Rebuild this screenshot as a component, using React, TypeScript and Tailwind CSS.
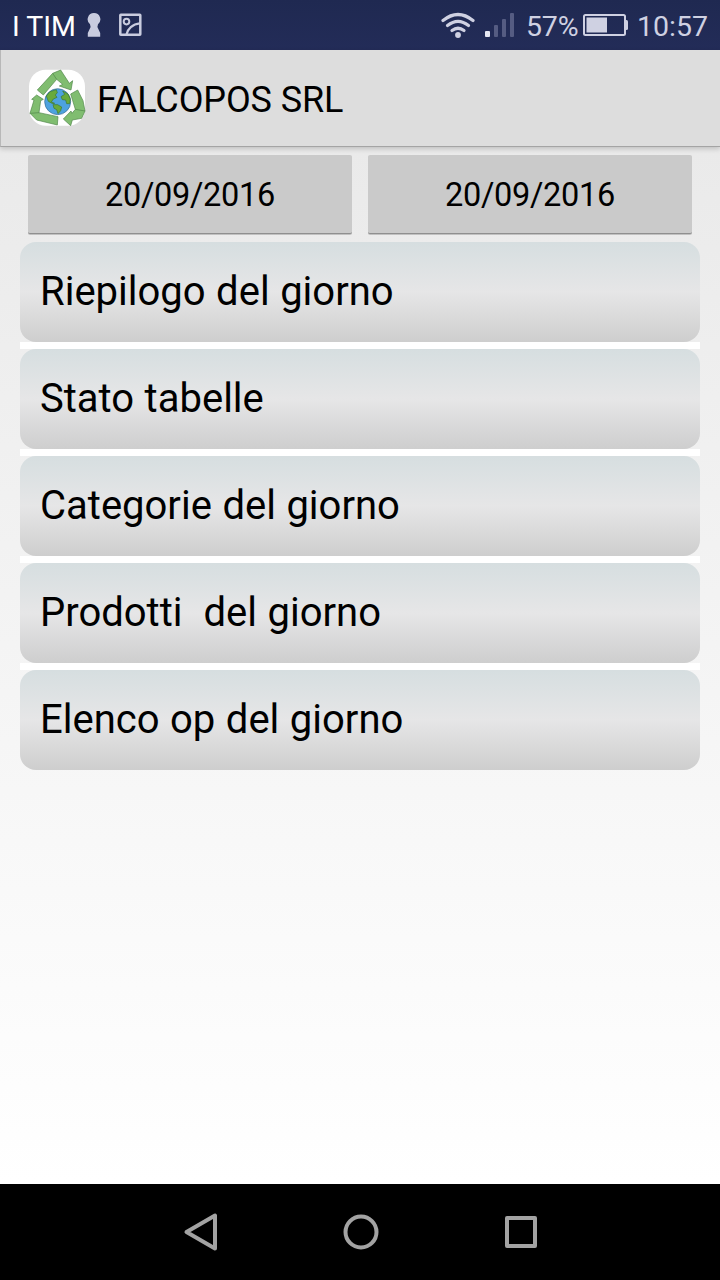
const ENTRIES = [
  'Riepilogo del giorno',
  'Stato tabelle',
  'Categorie del giorno',
  'Prodotti  del giorno',
  'Elenco op del giorno',
];

const DATES = ['20/09/2016', '20/09/2016'];

function StatusBar() {
  return (
    <div className="flex h-[50px] shrink-0 items-center bg-linear-to-b from-[#1f2951] to-[#232c58] px-3 text-[28.5px] leading-[50px] text-[#cfd1e2]">
      <span className="w-[75px] whitespace-nowrap pt-[3px] text-white">I TIM</span>
      <svg className="h-[50px] w-[14px]" viewBox="0 0 14 50" fill="#c9ccdf">
        <path d="M7 13a6.3 6.3 0 0 1 4 11.2 L10.4 27 L13.2 33 V36.8 H0.8 V33 L3.6 27 L3 24.2 A6.3 6.3 0 0 1 7 13z" />
      </svg>
      <svg className="ml-[17px] h-[50px] w-6" viewBox="118 0 24 50" fill="none" stroke="#c9ccdf" strokeWidth="2.5">
        <rect x="120.3" y="14.8" width="20" height="20" rx="0.5" />
        <circle cx="126.5" cy="21.6" r="2.8" strokeWidth="2" />
        <path d="M126.5 34.500C127.500 29 132.500 24 140 23.300" strokeWidth="2.2" />
      </svg>

      <svg className="ml-auto h-[50px] w-[74px]" viewBox="441 0 74 50">
        <g fill="none" stroke="#cfd1e2" strokeWidth="3.2" strokeLinecap="round">
          <path d="M443 20.500Q458 8.500 473 20.500" />
          <path d="M447.500 25.600Q458 17.200 468.500 25.600" />
          <path d="M452 30.500Q458 26 464 30.500" />
        </g>
        <circle cx="458" cy="35" r="2.9" fill="#cfd1e2" />
        <rect x="485" y="31" width="5" height="6" rx="1" fill="#e6e7f2" />
        <g fill="#555c82">
          <rect x="494" y="25" width="4" height="12" rx="1" />
          <rect x="502" y="19" width="4" height="18" rx="1" />
          <rect x="510" y="13" width="4" height="24" rx="1" />
        </g>
      </svg>
      <span className="ml-[11px] w-[57px] whitespace-nowrap pt-[3px] tracking-[-0.2px]">57%</span>
      <svg className="h-[50px] w-[46px]" viewBox="583 0 46 50">
        <rect x="584" y="15" width="41" height="20" rx="1.5" fill="none" stroke="#cfd1e2" strokeWidth="2" />
        <rect x="586.5" y="17.5" width="20.5" height="15" fill="#cfd1e2" />
        <path d="M625 20h1.500q1.500 0 1.500 1.500v7q0 1.500-1.500 1.500H625z" fill="#cfd1e2" />
      </svg>
      <span className="ml-[8px] w-[71px] whitespace-nowrap pt-[3px]">10:57</span>
    </div>
  );
}

function Logo() {
  return (
    <svg className="mb-[2px] size-[58px]" viewBox="24 24 174 174">
      <rect x="27" y="29" width="168" height="168" rx="50" fill="#fff" />
      <g fill="#80bd70" stroke="#4f8549" strokeWidth="2" strokeLinejoin="round">
        {/* top arrow */}
        <path d="M52 90 L98 40 L122 30 L148 70 L158 62 L153 90 L118 78 L128 73 L110 58 L70 105z" />
        <path d="M98 40 L110 58" />
        {/* right arrow */}
        <path d="M152 102 L173 90 L189 122 L195 153 L185 175 L157 180 L152 197 L130 177 L153 153 L156 160 L166 148z" />
        <path d="M166 148 L195 153" />
        {/* left arrow */}
        <path d="M35 118 L50 105 L70 118 L62 122 L57 158 L114 170 L112 195 L50 180 L30 160 L42 120z" />
        <path d="M57 158 L30 160" />
      </g>
      <circle cx="113" cy="125" r="39" fill="#4da2df" stroke="#37688f" strokeWidth="2" />
      <g fill="#68aa3c" stroke="#3d762d" strokeWidth="2" strokeLinejoin="round">
        <path d="M79 108 L90 95 L109 89 L112 98 L106 105 L111 112 L100 117 L94 126 L104 130 L98 131 L85 124z" />
        <path d="M99 134 L113 134 L125 141 L122 152 L114 161 L110 149 L102 145z" />
        <path d="M128 93 L144 102 L151 117 L149 131 L140 131 L137 120 L127 119 L123 110 L134 103z" />
      </g>
    </svg>
  );
}

function ActionBar() {
  return (
    <header className="z-10 flex h-[97px] shrink-0 items-center border-b border-l border-b-[#a4a4a4] border-l-[#b8b8b8] bg-[#dddddd] pb-px pl-[27px] shadow-[0_2px_5px_rgba(0,0,0,0.18)]">
      <Logo />
      <h1 className="ml-[11px] whitespace-nowrap pt-[4px] text-[36px] leading-[48px] tracking-[-0.1px] text-black">FALCOPOS SRL</h1>
    </header>
  );
}

function NavBar() {
  return (
    <nav className="flex h-24 shrink-0 items-center justify-center bg-black">
      <svg className="h-24 w-[400px]" viewBox="160 1184 400 96" fill="none" stroke="#a3a3a3" strokeWidth="4" strokeLinejoin="round">
        <path d="M215 1215.500 V1248.500 L186.500 1232z" />
        <circle cx="361" cy="1232" r="15.5" />
        <rect x="507" y="1218" width="28" height="28" />
      </svg>
    </nav>
  );
}

export default function App() {
  return (
    <div className="flex h-[1280px] w-[720px] flex-col overflow-hidden font-[Roboto,sans-serif]">
      <StatusBar />
      <ActionBar />
      <main className="flex-1 bg-linear-to-b from-[#eaeaea] to-white px-5 pt-2">
        <div className="flex gap-4 px-2">
          {DATES.map((d, i) => (
            <button
              key={i}
              className="h-[79px] flex-1 rounded-[2px] border-b border-b-[#8f8f8f] bg-[#cacaca] pt-[3px] text-[32.5px] tracking-[-0.3px] text-black shadow-[0_1px_0_rgba(0,0,0,0.18)]"
            >
              {d}
            </button>
          ))}
        </div>
        <ul className="mt-2 flex flex-col">
          {ENTRIES.map((label, i) => (
            <li key={label}>
              {i > 0 && <div className="h-[7px] bg-white" />}
              <div className="flex h-[100px] items-center whitespace-pre rounded-[16px] bg-linear-to-b from-[#d6dee0] via-[#e6e6e7] to-[#cecece] px-5 text-[40px] [word-spacing:0.6px] text-black">
                {label}
              </div>
            </li>
          ))}
        </ul>
      </main>
      <NavBar />
    </div>
  );
}
